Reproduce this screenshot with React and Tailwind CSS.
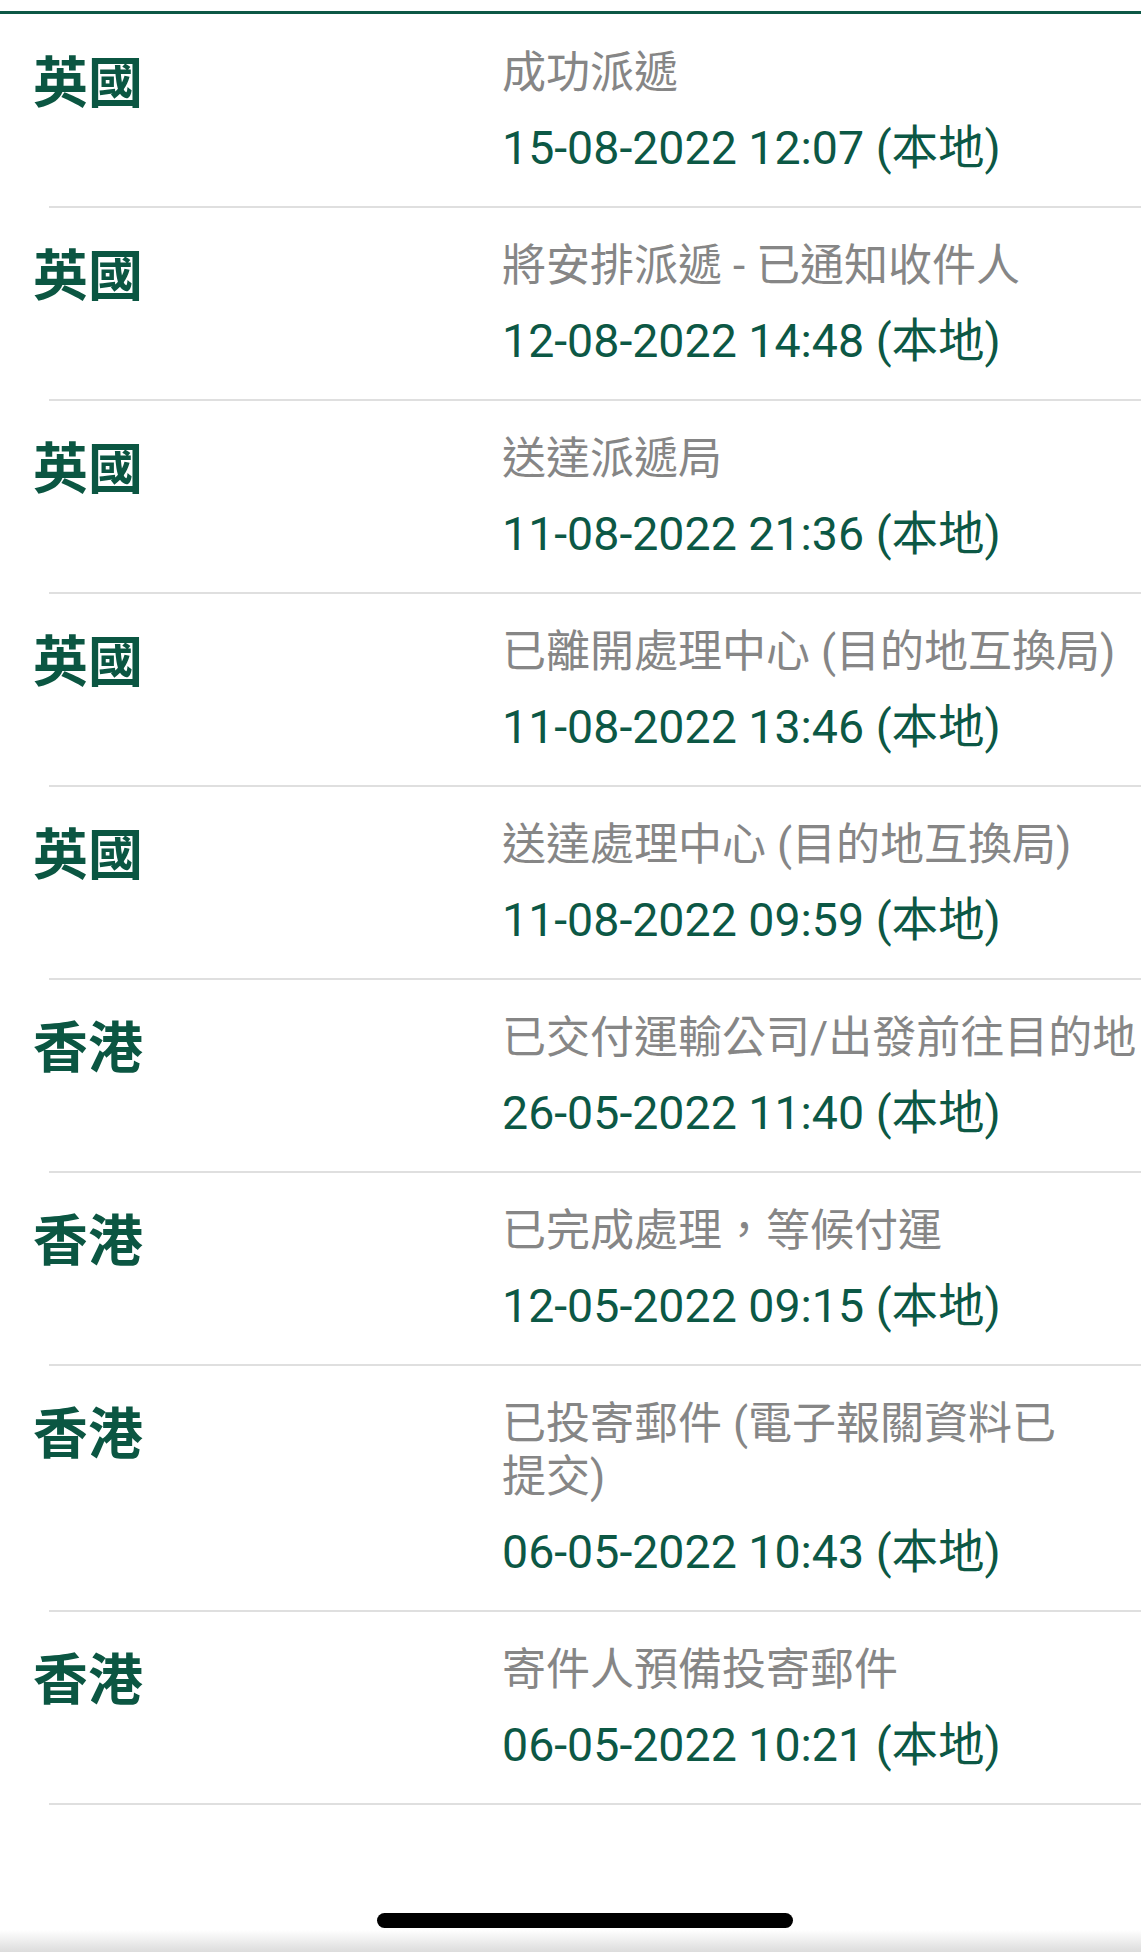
import React from "react";

const events = [
    { place: "英國", lines: ["成功派遞"], time: "15-08-2022 12:07" },
    { place: "英國", lines: ["將安排派遞 - 已通知收件人"], time: "12-08-2022 14:48" },
    { place: "英國", lines: ["送達派遞局"], time: "11-08-2022 21:36" },
    { place: "英國", lines: ["已離開處理中心 (目的地互換局)"], time: "11-08-2022 13:46" },
    { place: "英國", lines: ["送達處理中心 (目的地互換局)"], time: "11-08-2022 09:59" },
    { place: "香港", lines: ["已交付運輸公司/出發前往目的地"], time: "26-05-2022 11:40" },
    { place: "香港", lines: ["已完成處理，等候付運"], time: "12-05-2022 09:15" },
    { place: "香港", lines: ["已投寄郵件 (電子報關資料已", "提交)"], time: "06-05-2022 10:43" },
    { place: "香港", lines: ["寄件人預備投寄郵件"], time: "06-05-2022 10:21" },
];

function EventRow({ place, lines, time }) {
    return (
        <div>
            <div className="flex items-start pt-[32px] pb-[30px]">
                <div className="w-[502px] shrink-0 pl-[33px] font-['Noto_Sans_CJK_TC',sans-serif] text-[55px] font-bold leading-[62px] text-[#0b5642]">
                    {place}
                </div>
                <div className="flex flex-col whitespace-nowrap">
                    {lines.map((line, i) => (
                        <div
                            key={i}
                            className="font-['Roboto','Noto_Sans_CJK_TC',sans-serif] text-[44px] leading-[53px] text-[#868686]"
                        >
                            {line}
                        </div>
                    ))}
                    <div className="mt-[20px] font-['Roboto','Noto_Sans_CJK_TC',sans-serif] text-[46.5px] leading-[56px] text-[#0c5845]">
                        {time} (本地)
                    </div>
                </div>
            </div>
            <div className="ml-[49px] h-[2px] bg-[#dfdfdf]" />
        </div>
    );
}

export default function App() {
    return (
        <div className="w-[1141px] overflow-hidden bg-white">
            <div className="pt-[11px] pb-[1px]">
                <div className="h-[3px] bg-[#0d5846]" />
            </div>
            {events.map((e, i) => (
                <EventRow key={i} {...e} />
            ))}
            <div className="pt-[108px]">
                <div className="ml-[377px] h-[15px] w-[416px] rounded-full bg-black" />
                <div className="mt-[2px] h-[22px] bg-gradient-to-b from-white to-[#dcdcdc]" />
            </div>
        </div>
    );
}
